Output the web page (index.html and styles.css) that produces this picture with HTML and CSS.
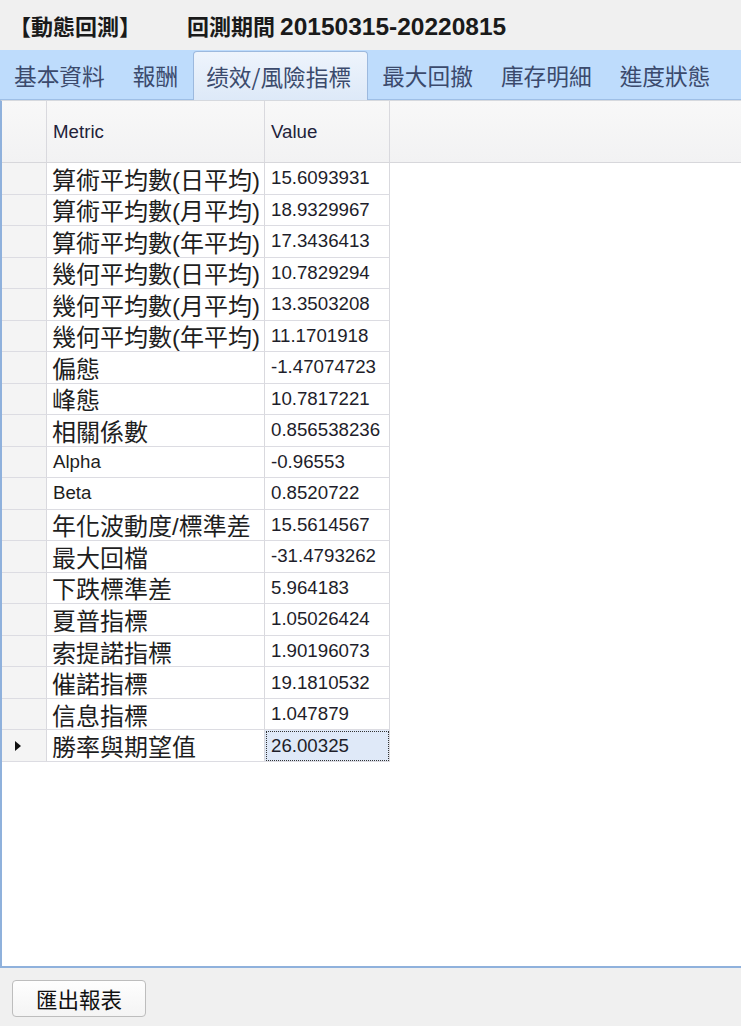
FILE: index.html
```html
<!DOCTYPE html>
<html lang="zh-Hant">
<head>
<meta charset="utf-8">
<title>動態回測</title>
<link rel="stylesheet" href="styles.css">
</head>
<body>
<div class="app">
  <div class="titlebar">
    <span class="t1">【動態回測】</span>
    <span class="t2">回測期間 <span class="date">20150315-20220815</span></span>
  </div>
  <div class="tabs">
    <div class="tab">基本資料</div>
    <div class="tab">報酬</div>
    <div class="tab active">绩效/風險指標</div>
    <div class="tab">最大回撤</div>
    <div class="tab">庫存明細</div>
    <div class="tab">進度狀態</div>
  </div>
  <div class="panel">
    <div class="hrow">
      <div class="c0"></div>
      <div class="c1 lat">Metric</div>
      <div class="c2 lat">Value</div>
      <div class="c3"></div>
    </div>
    <div class="row"><div class="c0"></div><div class="c1">算術平均數(日平均)</div><div class="c2">15.6093931</div></div>
    <div class="row"><div class="c0"></div><div class="c1">算術平均數(月平均)</div><div class="c2">18.9329967</div></div>
    <div class="row"><div class="c0"></div><div class="c1">算術平均數(年平均)</div><div class="c2">17.3436413</div></div>
    <div class="row"><div class="c0"></div><div class="c1">幾何平均數(日平均)</div><div class="c2">10.7829294</div></div>
    <div class="row"><div class="c0"></div><div class="c1">幾何平均數(月平均)</div><div class="c2">13.3503208</div></div>
    <div class="row"><div class="c0"></div><div class="c1">幾何平均數(年平均)</div><div class="c2">11.1701918</div></div>
    <div class="row"><div class="c0"></div><div class="c1">偏態</div><div class="c2">-1.47074723</div></div>
    <div class="row"><div class="c0"></div><div class="c1">峰態</div><div class="c2">10.7817221</div></div>
    <div class="row"><div class="c0"></div><div class="c1">相關係數</div><div class="c2">0.856538236</div></div>
    <div class="row"><div class="c0"></div><div class="c1 lat">Alpha</div><div class="c2">-0.96553</div></div>
    <div class="row"><div class="c0"></div><div class="c1 lat">Beta</div><div class="c2">0.8520722</div></div>
    <div class="row"><div class="c0"></div><div class="c1">年化波動度/標準差</div><div class="c2">15.5614567</div></div>
    <div class="row"><div class="c0"></div><div class="c1">最大回檔</div><div class="c2">-31.4793262</div></div>
    <div class="row"><div class="c0"></div><div class="c1">下跌標準差</div><div class="c2">5.964183</div></div>
    <div class="row"><div class="c0"></div><div class="c1">夏普指標</div><div class="c2">1.05026424</div></div>
    <div class="row"><div class="c0"></div><div class="c1">索提諾指標</div><div class="c2">1.90196073</div></div>
    <div class="row"><div class="c0"></div><div class="c1">催諾指標</div><div class="c2">19.1810532</div></div>
    <div class="row"><div class="c0"></div><div class="c1">信息指標</div><div class="c2">1.047879</div></div>
    <div class="row current"><div class="c0"><span class="arrow"></span></div><div class="c1">勝率與期望值</div><div class="c2 selected">26.00325</div></div>
  </div>
  <div class="footer">
    <button class="btn">匯出報表</button>
  </div>
</div>
</body>
</html>
```

FILE: styles.css
```css
* { box-sizing: border-box; }
html, body { margin: 0; padding: 0; }
body {
  background: #f0f0f0;
  font-family: "Liberation Sans", "Noto Sans CJK TC", sans-serif;
  color: #1e1e1e;
}
.app {
  width: 741px;
  height: 1026px;
  display: flex;
  flex-direction: column;
  overflow: hidden;
}
.titlebar {
  height: 50px;
  flex: none;
  display: flex;
  align-items: center;
  padding-left: 9px;
  padding-bottom: 1px;
  font-family: "Noto Sans CJK TC", sans-serif;
  font-size: 22px;
  font-weight: 700;
  color: #1a1a1a;
}
.t2 { margin-left: 46px; }
.date {
  font-family: "Liberation Sans", sans-serif;
  font-size: 24.5px;
  font-weight: 700;
}
.tabs {
  height: 50px;
  flex: none;
  display: flex;
  align-items: stretch;
  background: #bedcfc;
  border-bottom: 1px solid #9ebfe6;
  padding-top: 1px;
}
.tab {
  padding: 0 14px;
  display: flex;
  align-items: center;
  font-family: "Noto Sans CJK TC", sans-serif;
  font-size: 22.7px;
  color: #3b4a6c;
}
.tab.active {
  background: linear-gradient(#eef4fc, #dde9f8);
  border: 1px solid #9cb9de;
  border-bottom: none;
  border-radius: 4px 4px 0 0;
  margin: 0 0 -1px 1px;
  padding: 0 16px 0 12px;
}
.panel {
  height: 868px;
  flex: none;
  background: #ffffff;
  border-left: 2px solid #8fb1dc;
  border-bottom: 2px solid #8fb1dc;
  border-top: 1px solid #d6d9de;
}
.hrow {
  height: 62px;
  display: flex;
  background: linear-gradient(#f8f8f8, #f2f2f3);
  border-bottom: 1px solid #d7d7db;
}
.row {
  height: 31.53px;
  display: flex;
}
.c0, .c1, .c2 {
  flex: none;
  display: flex;
  align-items: center;
  border-right: 1px solid #d9d9de;
}
.row .c0, .row .c1, .row .c2 { border-bottom: 1px solid #dcdce2; }
.c0 { width: 45px; }
.row .c0 { background: #f4f4f4; justify-content: flex-start; padding-left: 13px; }
.c1 {
  width: 218px;
  padding-left: 5px;
  font-family: "Liberation Sans", "Noto Sans CJK TC", sans-serif;
  font-size: 24px;
  white-space: nowrap;
  color: #1e1e1e;
}
.c1.lat, .c2 { font-size: 18.7px; }
.c1.lat { padding-left: 6px; }
.c2 {
  width: 125px;
  padding-left: 6px;
  color: #1e1e2a;
  white-space: nowrap;
}
.hrow .c1, .hrow .c2 { color: #22223a; }
.c3 { flex: 1; }
.selected {
  background: #dfe9f8;
  outline: 1px dotted #333;
  outline-offset: -2px;
}
.arrow {
  width: 0;
  height: 0;
  border-top: 5px solid transparent;
  border-bottom: 5px solid transparent;
  border-left: 6px solid #111;
}
.footer {
  flex: 1;
  padding: 12px 0 0 12px;
}
.btn {
  width: 134px;
  height: 37px;
  background: linear-gradient(#fefefe, #f4f4f4);
  border: 1px solid #bdbdbd;
  border-radius: 4px;
  font-family: "Noto Sans CJK TC", sans-serif;
  font-size: 21.5px;
  color: #111;
  padding: 0;
}
```
